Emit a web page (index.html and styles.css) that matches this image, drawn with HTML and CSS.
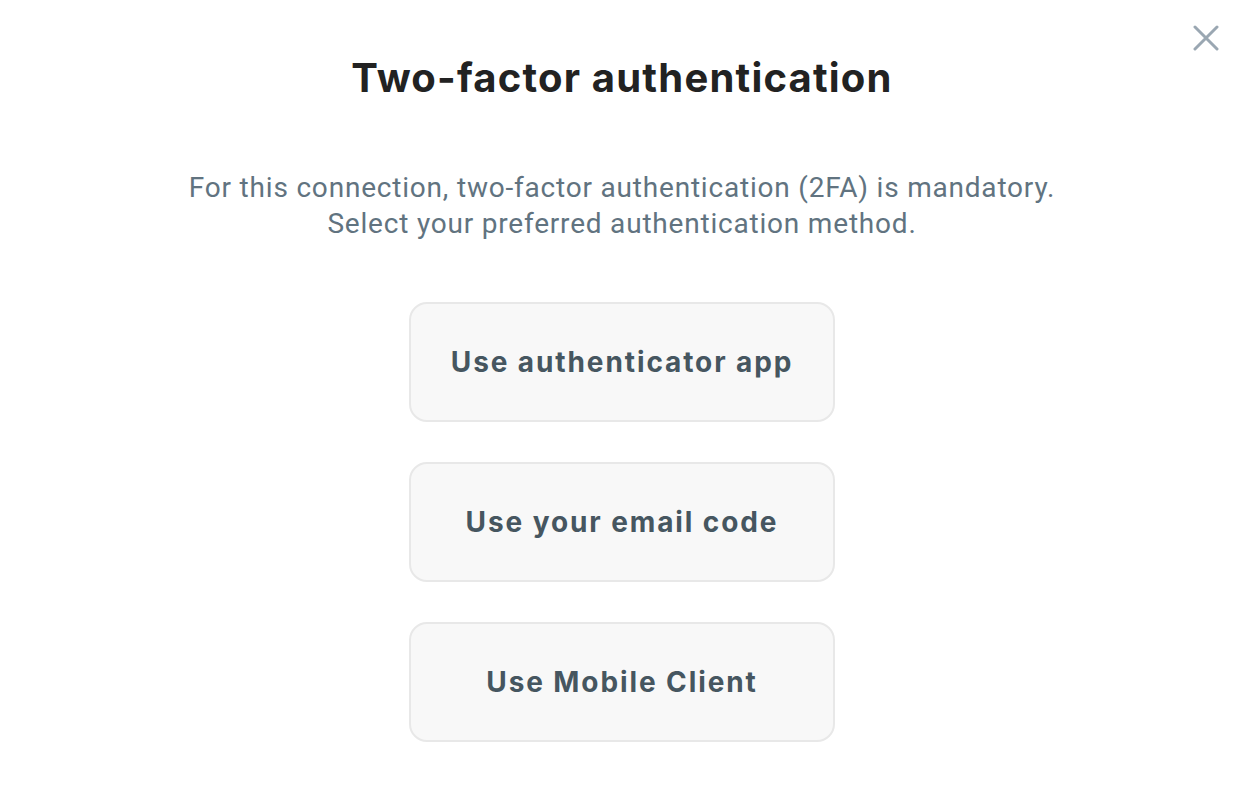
FILE: index.html
```html
<!DOCTYPE html>
<html lang="en">
<head>
<meta charset="utf-8">
<title>Two-factor authentication</title>
<link rel="stylesheet" href="styles.css">
</head>
<body>
<div class="dialog">
  <button class="close" aria-label="Close">
    <svg width="26" height="26" viewBox="0 0 26 26"><path d="M2 2L24 24M24 2L2 24" stroke="#9aa7b2" stroke-width="3" stroke-linecap="round"/></svg>
  </button>
  <h1 class="title">Two-factor authentication</h1>
  <p class="desc">For this connection, two-factor authentication (2FA) is mandatory.<br>Select your preferred authentication method.</p>
  <div class="options">
    <button class="option">Use authenticator app</button>
    <button class="option">Use your email code</button>
    <button class="option">Use Mobile Client</button>
  </div>
</div>
</body>
</html>
```
FILE: styles.css
```css
html, body {
  margin: 0;
  padding: 0;
  background: #ffffff;
}
.dialog {
  position: relative;
  width: 1242px;
  height: 792px;
  display: flex;
  flex-direction: column;
  align-items: center;
  box-sizing: border-box;
  padding-top: 51px;
  padding-left: 2px;
}
.close {
  position: absolute;
  top: 25px;
  right: 23px;
  width: 26px;
  height: 26px;
  padding: 0;
  border: none;
  background: none;
  display: flex;
}
.title {
  margin: 0;
  font-family: "Inter", "Noto Sans", sans-serif;
  font-weight: 700;
  font-size: 40px;
  line-height: 54px;
  color: #222222;
  letter-spacing: 1.2px;
}
.desc {
  margin: 0;
  margin-top: 65px;
  font-family: Roboto, "Liberation Sans", sans-serif;
  font-size: 28px;
  line-height: 36px;
  letter-spacing: 0.8px;
  color: #617380;
  text-align: center;
}
.options {
  margin-top: 60px;
  display: flex;
  flex-direction: column;
  gap: 40px;
}
.option {
  width: 426px;
  height: 120px;
  box-sizing: border-box;
  border: 2px solid #e8e8e8;
  border-radius: 18px;
  background: #f8f8f8;
  font-family: "Inter", "Noto Sans", sans-serif;
  font-weight: 700;
  font-size: 28px;
  letter-spacing: 1.9px;
  color: #465660;
  cursor: pointer;
}
```
